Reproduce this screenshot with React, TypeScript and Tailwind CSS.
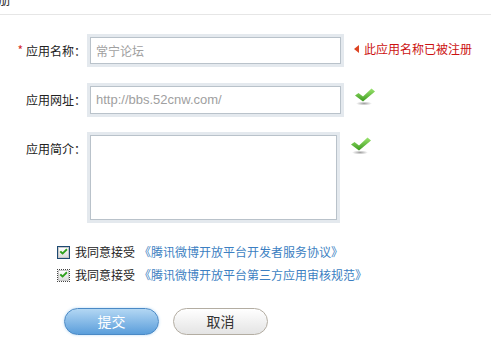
import React from "react";

const Check = () => (
  <svg width="22" height="18" viewBox="0 0 22 18">
    <defs>
      <linearGradient id="cg" x1="0" y1="0" x2="0" y2="1">
        <stop offset="0" stopColor="#9be56f" />
        <stop offset="1" stopColor="#3c9a1e" />
      </linearGradient>
      <radialGradient id="sh" cx="0.5" cy="0.5" r="0.5">
        <stop offset="0" stopColor="#888" stopOpacity="0.8" />
        <stop offset="1" stopColor="#888" stopOpacity="0" />
      </radialGradient>
    </defs>
    <ellipse cx="10" cy="15.5" rx="8" ry="2" fill="url(#sh)" />
    <path d="M1 7.5 L4.5 5 L9 8.5 L17.5 0.5 L21 3.5 L9 13.5 Z" fill="url(#cg)" />
  </svg>
);

const SmallCheck = () => (
  <svg width="9" height="8" viewBox="0 0 9 8">
    <path d="M0.5 4 L2 2.8 L3.6 4.3 L7.3 0.6 L8.6 1.9 L3.6 6.8 Z" fill="#2fa01d" />
  </svg>
);

const Box = ({ dotted }: { dotted?: boolean }) => (
  <div
    className={
      "w-[13px] h-[13px] flex items-center justify-center " +
      (dotted ? "border border-dotted border-[#444]" : "border border-[#1d4a73]")
    }
  >
    <div className="w-[11px] h-[11px] flex items-center justify-center bg-gradient-to-b from-[#ffffff] to-[#dcdcdc] border border-[#c8c8c8]">
      <SmallCheck />
    </div>
  </div>
);

export default function App() {
  const font = "font-['Noto_Sans_CJK_SC','Liberation_Sans',sans-serif]";
  return (
    <div className={"w-[491px] h-[343px] bg-white overflow-hidden text-[12px] text-[#222] " + font}>
      <div className="h-[15px] border-b border-[#e6e6e6] overflow-hidden">
        <div className="mt-[-9px] ml-[-2px] text-[13px] leading-[16px] text-[#333]">册</div>
      </div>

      <div className="mt-[19px] flex items-start">
        <div className="w-[87px] h-[33px] flex items-center justify-end pr-[1px]">
          <span className="text-[#d42a2a] mr-[3px] mt-[-2px]">*</span>
          <span>应用名称：</span>
        </div>
        <div className="w-[257px] h-[33px] p-[3px] bg-[#e4e9ee]">
          <div className="h-full border border-[#b9c2ca] bg-white flex items-center pl-[5px] text-[#a0a0a0] text-[12px]">
            常宁论坛
          </div>
        </div>
        <div className="ml-[10px] h-[30px] flex items-center text-[#cc1111]">
          <div className="w-0 h-0 border-y-[4px] border-y-transparent border-r-[5px] border-r-[#dd4422] mr-[5px]" />
          此应用名称已被注册
        </div>
      </div>

      <div className="mt-[16px] flex items-start">
        <div className="w-[87px] h-[33px] flex items-center justify-end pr-[1px]">
          <span>应用网址：</span>
        </div>
        <div className="w-[257px] h-[34px] p-[3px] bg-[#e4e9ee]">
          <div className="h-full border border-[#b9c2ca] bg-white flex items-center pl-[5px] text-[#a0a0a0] text-[13px] font-['Liberation_Sans',sans-serif]">
            http://bbs.52cnw.com/
          </div>
        </div>
        <div className="ml-[10px] mt-[5px]">
          <Check />
        </div>
      </div>

      <div className="mt-[15px] flex items-start">
        <div className="w-[87px] h-[33px] flex items-center justify-end pr-[1px]">
          <span>应用简介：</span>
        </div>
        <div className="w-[253px] h-[91px] p-[3px] bg-[#e4e9ee]">
          <div className="h-full border border-[#b9c2ca] bg-white" />
        </div>
        <div className="ml-[10px] mt-[5px]">
          <Check />
        </div>
      </div>

      <div className="mt-[19px] ml-[57px] flex flex-col gap-[3px]">
        <div className="flex items-center h-[20px]">
          <Box />
          <span className="ml-[5px]">我同意接受</span>
          <span className="ml-[4px] text-[#3c7fc2]">《腾讯微博开放平台开发者服务协议》</span>
        </div>
        <div className="flex items-center h-[20px]">
          <Box dotted />
          <span className="ml-[5px]">我同意接受</span>
          <span className="ml-[4px] text-[#3c7fc2]">《腾讯微博开放平台第三方应用审核规范》</span>
        </div>
      </div>

      <div className="mt-[23px] ml-[64px] flex gap-[14px]">
        <button className="w-[95px] h-[27px] rounded-full border border-[#4a89c5] bg-gradient-to-b from-[#b3d7f3] to-[#5a9edb] text-white text-[14px] shadow-[0_0_3px_#b9daf5]">
          提交
        </button>
        <button className="w-[95px] h-[27px] rounded-full border border-[#b3ada2] bg-gradient-to-b from-[#ffffff] to-[#e4e4e4] text-[#333] text-[14px]">
          取消
        </button>
      </div>
    </div>
  );
}
